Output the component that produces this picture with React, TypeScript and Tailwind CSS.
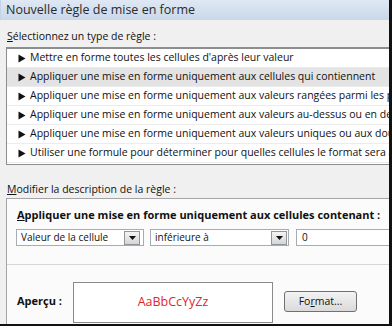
import React from "react";

const font = { fontFamily: "'Open Sans', 'Noto Sans', sans-serif" };

function Arrow() {
  return (
    <svg width="8" height="9" viewBox="0 0 8 9" className="shrink-0">
      <path d="M0.5 0.5 L7.5 4.5 L0.5 8.5 Z" fill="#111" />
    </svg>
  );
}

function DropBtn() {
  return (
    <div className="w-[16px] h-[14px] border border-[#8f959c] bg-gradient-to-b from-[#f4f4f4] to-[#d6d6d6] flex items-center justify-center shrink-0">
      <svg width="7" height="4" viewBox="0 0 7 4">
        <path d="M0 0 L7 0 L3.5 4 Z" fill="#111" />
      </svg>
    </div>
  );
}

const rows = [
  "Mettre en forme toutes les cellules d'après leur valeur",
  "Appliquer une mise en forme uniquement aux cellules qui contiennent",
  "Appliquer une mise en forme uniquement aux valeurs rangées parmi les premières ou les dernières valeurs",
  "Appliquer une mise en forme uniquement aux valeurs au-dessus ou en dessous de la moyenne",
  "Appliquer une mise en forme uniquement aux valeurs uniques ou aux doublons",
  "Utiliser une formule pour déterminer pour quelles cellules le format sera appliqué",
];

export default function App() {
  return (
    <div className="w-[392px] h-[326px] overflow-hidden" style={font}>
      <div className="w-[392px] h-[326px] border-r-[3px] border-b-2 border-[#111] flex flex-col overflow-hidden bg-[#f0f0f0] text-[#111]">
        <div className="h-[20px] shrink-0 bg-gradient-to-b from-[#dfe8f4] to-[#c9d8ea] flex items-center pl-[5px] text-[12.5px] text-[#2a2a2a] border-l border-[#c5d3e4] whitespace-nowrap">
          Nouvelle règle de mise en forme
        </div>
        <div className="flex-1 flex flex-col bg-[#f0f0f0] pl-[6px] overflow-hidden">
          <div className="h-[26px] shrink-0 flex items-end pb-[1px] pl-[1px] text-[10.5px] whitespace-nowrap">
            <span><span className="underline">S</span>électionnez un type de règle :</span>
          </div>
          <div className="mt-[1px] h-[118px] shrink-0 border-t-2 border-l border-b border-[#8d8d8d] bg-white overflow-hidden">
            {rows.map((r, i) => (
              <div
                key={i}
                className={`h-[19px] flex items-center gap-[4px] pl-[11px] whitespace-nowrap text-[10.5px] border-b border-[#ececec] ${i === 1 ? "bg-[#e3e3e3]" : ""}`}
              >
                <Arrow />
                <span>{r}</span>
              </div>
            ))}
          </div>
          <div className="h-[33px] shrink-0 flex items-end pb-0 pl-[1px] text-[10.5px] whitespace-nowrap">
            <span><span className="underline">M</span>odifier la description de la règle :</span>
          </div>
          <div className="flex-1 border-t border-l border-[#a5a5a5] bg-[#fbfbfb] flex flex-col">
            <div className="h-[24px] shrink-0 flex items-end pl-[10px] text-[11px] font-bold whitespace-nowrap">
              <span><span className="underline">A</span>ppliquer une mise en forme uniquement aux cellules contenant :</span>
            </div>
            <div className="flex items-center mt-[6px] pl-[9px] h-[17px] shrink-0">
              <div className="w-[128px] h-[17px] shrink-0 border border-[#a7acb3] bg-white flex items-center justify-between pl-[4px] pr-[3px] text-[10px] whitespace-nowrap">
                <span>Valeur de la cellule</span>
                <DropBtn />
              </div>
              <div className="ml-[6px] w-[139px] h-[17px] shrink-0 border border-[#a7acb3] bg-white flex items-center justify-between pl-[4px] pr-[1px] text-[10px] whitespace-nowrap">
                <span>inférieure à</span>
                <DropBtn />
              </div>
              <div className="ml-[7px] w-[120px] h-[17px] shrink-0 border border-[#a7acb3] bg-white flex items-center pl-[5px] text-[10px]">
                <span>0</span>
              </div>
            </div>
            <div className="mt-[18px] h-px shrink-0 bg-[#d6d6d6]" />
            <div className="flex items-start mt-[17px]">
              <div className="w-[66px] pl-[10px] pt-[11px] text-[11px] font-bold whitespace-nowrap">Aperçu :</div>
              <div className="w-[200px] h-[41px] border border-[#8a8a8a] bg-white flex items-center justify-center text-[12.5px] text-[#e0262b]">
                AaBbCcYyZz
              </div>
              <div className="ml-[11px] mt-[9px] w-[73px] h-[21px] rounded-[3px] border border-[#707070] bg-gradient-to-b from-[#f3f3f3] to-[#dadada] flex items-center justify-center text-[10.5px]">
                <span>Fo<span className="underline">r</span>mat...</span>
              </div>
            </div>
          </div>
        </div>
      </div>
    </div>
  );
}
